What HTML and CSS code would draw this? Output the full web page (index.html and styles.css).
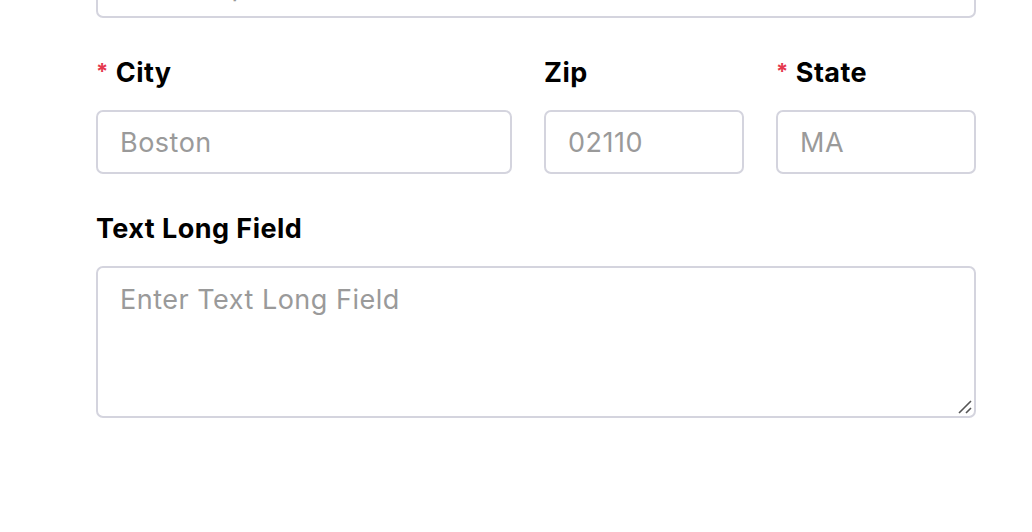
FILE: index.html
```html
<!DOCTYPE html>
<html>
<head>
<meta charset="utf-8">
<link rel="stylesheet" href="styles.css">
</head>
<body>
<form class="form">
  <div class="field">
    <input class="input" type="text" placeholder="Enter Sup Address">
  </div>
  <div class="row">
    <div class="field city">
      <label class="label"><span class="req">*</span>City</label>
      <input class="input" type="text" placeholder="Boston">
    </div>
    <div class="field small">
      <label class="label">Zip</label>
      <input class="input" type="text" placeholder="02110">
    </div>
    <div class="field small">
      <label class="label"><span class="req">*</span>State</label>
      <input class="input" type="text" placeholder="MA">
    </div>
  </div>
  <div class="field">
    <label class="label">Text Long Field</label>
    <div class="ta-wrap">
      <textarea class="input textarea" placeholder="Enter Text Long Field"></textarea>
      <svg class="grip" width="16" height="16" viewBox="0 0 16 16"><path d="M2 14 L14 2 M9 14 L14 9" stroke="#555" stroke-width="1.6" fill="none"/></svg>
    </div>
  </div>
</form>
</body>
</html>
```

FILE: styles.css
```css
* { box-sizing: border-box; }
html, body { margin: 0; padding: 0; background: #fff; }
body {
  font-family: Inter, "Noto Sans", sans-serif;
  width: 1032px;
  height: 532px;
  overflow: hidden;
}
.form {
  width: 880px;
  margin: -46px 0 0 96px;
  display: flex;
  flex-direction: column;
  gap: 39px;
}
.field {
  display: flex;
  flex-direction: column;
  gap: 21px;
}
.row {
  display: flex;
  gap: 32px;
}
.city { flex: 0 0 416px; }
.small { flex: 0 0 200px; }
.label {
  display: flex;
  align-items: flex-start;
  font-size: 27px;
  line-height: 32px;
  font-weight: 700;
  letter-spacing: 0.45px;
  color: #000;
}
.req {
  color: #e5394f;
  font-size: 22px;
  line-height: 26px;
  font-weight: 700;
  margin-right: 7px;
  margin-top: 1px;
}
.input {
  display: block;
  width: 100%;
  height: 64px;
  border: 2px solid #d4d4de;
  border-radius: 7px;
  padding: 0 22px;
  font-family: Inter, "Noto Sans", sans-serif;
  font-size: 27px;
  letter-spacing: 0.5px;
  color: #333;
  background: #fff;
  outline: none;
}
.input::placeholder { color: #9a9a9a; }
.ta-wrap { position: relative; }
.textarea {
  height: 152px;
  padding: 14px 22px;
  line-height: 36px;
  resize: none;
}
.grip {
  position: absolute;
  right: 3px;
  bottom: 3px;
}
```
